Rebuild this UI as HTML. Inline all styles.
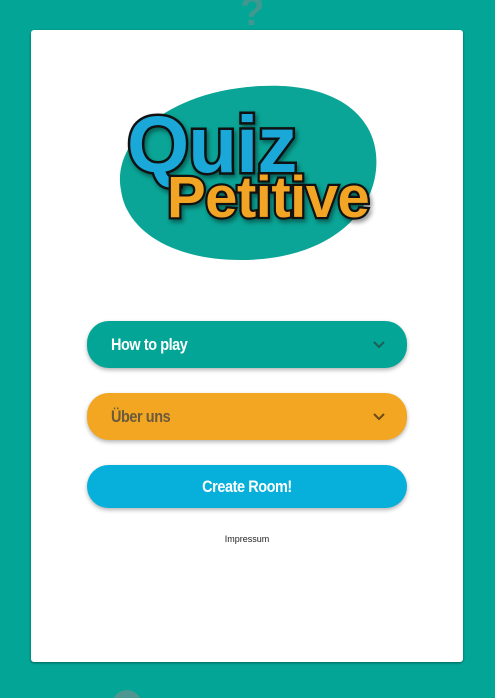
<!DOCTYPE html>
<html><head><meta charset="utf-8"><style>
html,body{margin:0;width:495px;height:698px;overflow:hidden}
body{background:#02a596;position:relative;font-family:"Liberation Sans",sans-serif}
.card{position:absolute;left:31px;top:30px;width:432px;height:632px;background:#fff;border-radius:3px;box-shadow:0 1px 2px rgba(0,0,0,.4)}
.btn{position:absolute;left:56px;width:320px;border-radius:22px;box-shadow:0 2px 4px rgba(0,0,0,.3);font-family:"Liberation Sans Narrow","Liberation Sans",sans-serif;font-weight:bold;font-size:17px;letter-spacing:-.5px}
.btn span{position:absolute;left:24px;top:50%;transform:translateY(-50%) scaleX(.85);transform-origin:left center}
.chev{position:absolute;right:22px;top:50%;margin-top:-4px}
</style></head><body>
<div style="position:absolute;left:240px;top:-10px;color:#8f8a8a;font:bold 40px 'Liberation Sans';opacity:.45">?</div>
<div style="position:absolute;left:112px;top:690px;width:30px;height:30px;border-radius:50%;background:#9a8a8a;opacity:.5"></div>
<div class="card">
<svg style="position:absolute;left:80px;top:50px" width="280" height="190" viewBox="0 0 280 190">
<path d="M10 110 C0 60 60 10 150 6 C230 2 270 40 265 90 C260 140 210 180 130 180 C60 180 15 150 10 110Z" fill="#0aa596"/>
<text x="16" y="92" font-family="Liberation Sans" font-weight="bold" font-size="80" fill="#1aa8d8" stroke="#111" stroke-width="5" paint-order="stroke" letter-spacing="-1" style="filter:drop-shadow(2px 3px 2px rgba(0,0,0,.4))">Quiz</text>
<text x="56" y="137" font-family="Liberation Sans" font-weight="bold" font-size="58" fill="#f2a424" stroke="#111" stroke-width="4.5" paint-order="stroke" letter-spacing="-0.5" style="filter:drop-shadow(2px 3px 2px rgba(0,0,0,.4))">Petitive</text>
</svg>
<div class="btn" style="top:291px;height:47px;background:#03a596;color:#fff"><span>How to play</span>
<svg class="chev" width="12" height="8"><path d="M1 1l5 5 5-5" stroke="#1f5e56" stroke-width="2" fill="none"/></svg></div>
<div class="btn" style="top:363px;height:47px;background:#f2a621;color:#6b5a3c"><span>Über uns</span>
<svg class="chev" width="12" height="8"><path d="M1 1l5 5 5-5" stroke="#6b4a1c" stroke-width="2" fill="none"/></svg></div>
<div class="btn" style="top:435px;height:43px;background:#07afdb;color:#fff;text-align:center"><span style="left:50%;transform:translate(-50%,-50%) scaleX(.85);transform-origin:center">Create Room!</span></div>
<div style="position:absolute;left:0;width:432px;top:504px;text-align:center;font-size:9px;color:#222">Impressum</div>
</div>
</body></html>
